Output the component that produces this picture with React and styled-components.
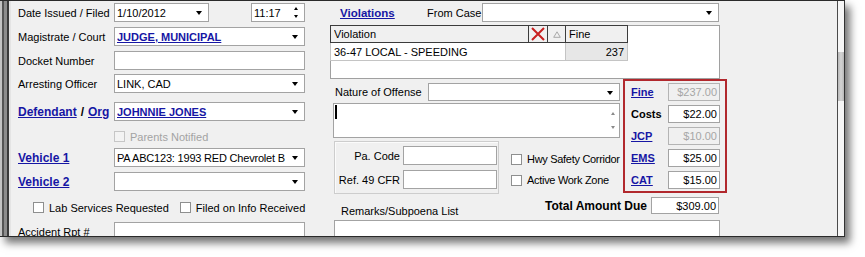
import React from 'react';
import styled, { createGlobalStyle } from 'styled-components';

const GlobalStyle = createGlobalStyle`
  html, body {
    margin: 0;
    padding: 0;
    background: #fff;
  }
  body {
    font-family: "Liberation Sans", Arial, sans-serif;
    font-size: 11px;
    color: #000;
  }
`;

const LINK = '#1616a4';

// ---- window chrome ----
const Stage = styled.div`
  width: 865px;
  height: 257px;
  overflow: hidden;
`;

const Window = styled.div`
  display: flex;
  width: 845px;
  height: 237px;
  box-sizing: border-box;
  border-top: 1px solid #2a2a2a;
  border-bottom: 1px solid #2a2a2a;
  background: #f0f0f0;
  box-shadow: 5px 6px 8px rgba(0, 0, 0, 0.55);
`;

const Frame = styled.div`
  flex: none;
  width: 11px;
  background: linear-gradient(
    to right,
    #c4c4c4 0 2px,
    #555 2px 4px,
    #8d8d8d 4px 7px,
    #3a3a3a 7px 9px,
    #e4e4e4 9px 11px
  );
`;

const Rail = styled.div`
  flex: none;
  width: 8px;
  box-sizing: border-box;
  border-left: 1px solid #4a4a4a;
  border-right: 1px solid #333;
  background: #f6f6f6;
  display: flex;
  flex-direction: column;
`;

const Thumb = styled.div`
  margin-top: 51px;
  height: 49px;
  background: linear-gradient(to right, #b8b8b8, #d4d4d4, #b8b8b8);
`;

const Content = styled.div`
  flex: 1;
  display: flex;
  align-items: flex-start;
  padding: 2px 0 0 7px;
  overflow: hidden;
`;

// ---- shared controls ----
const Column = styled.div`
  flex: none;
  width: ${p => p.$w}px;
  margin-left: ${p => p.$ml || 0}px;
  display: flex;
  flex-direction: column;
`;

const FieldRow = styled.div`
  display: flex;
  align-items: center;
  height: ${p => p.$h || 19}px;
  margin-top: ${p => p.$mt || 0}px;
  padding-left: ${p => p.$pl || 0}px;
  white-space: nowrap;
`;

const Label = styled.span`
  flex: none;
  width: ${p => p.$w || 96}px;
  text-align: ${p => p.$align || 'left'};
  padding-right: ${p => p.$pr || 0}px;
  box-sizing: border-box;
  white-space: nowrap;
`;

const LinkText = styled.span`
  color: ${LINK};
  font-weight: bold;
  font-size: ${p => p.$size || 12}px;
  text-decoration: underline;
`;

const Slash = styled.span`
  font-weight: bold;
  font-size: 12px;
  padding: 0 4px;
`;

const Box = styled.div`
  flex: none;
  display: flex;
  align-items: center;
  box-sizing: border-box;
  width: ${p => p.$w}px;
  height: ${p => p.$h || 19}px;
  background: ${p => (p.$disabled ? '#f0f0f0' : '#fff')};
  border: 1px solid ${p => (p.$disabled ? '#b4b4b4' : '#a3a3a3')};
  color: ${p => (p.$disabled ? '#a6a6a6' : '#000')};
  justify-content: ${p => (p.$right ? 'flex-end' : 'flex-start')};
  padding: 0 ${p => (p.$right ? 2 : 0)}px 0 2px;
  overflow: hidden;
  white-space: nowrap;
`;

const Value = styled.span`
  flex: 1;
  overflow: hidden;
  white-space: nowrap;
  letter-spacing: ${p => p.$tight ? '-0.2px' : 'normal'};
  ${p => p.$link && `color: ${LINK}; font-weight: bold; text-decoration: underline;`}
`;

const Arrow = styled.span`
  flex: none;
  margin: 1px 6px 0 2px;
  border-left: 3.5px solid transparent;
  border-right: 3.5px solid transparent;
  border-top: 4px solid #000;
`;

const SpinCol = styled.span`
  flex: none;
  display: flex;
  flex-direction: column;
  gap: 5px;
  margin-right: 6px;
`;

const Tri = styled.span`
  border-left: 2.5px solid transparent;
  border-right: 2.5px solid transparent;
  ${p => (p.$up ? 'border-bottom' : 'border-top')}: 3px solid ${p => p.$color || '#000'};
`;

const Select = ({ w, h, link, tight, children }) => (
  <Box $w={w} $h={h}>
    <Value $link={link} $tight={tight}>{children}</Value>
    <Arrow />
  </Box>
);

const Check = styled.span`
  flex: none;
  width: 11px;
  height: 11px;
  box-sizing: border-box;
  border: 1px solid ${p => (p.$disabled ? '#c6c6c6' : '#8e8f8f')};
  background: ${p => (p.$disabled ? '#f3f3f3' : '#fff')};
  margin-right: 5px;
`;

const CheckItem = styled.span`
  display: flex;
  align-items: center;
  margin-left: ${p => p.$ml || 0}px;
  color: ${p => (p.$disabled ? '#a3a3a3' : '#000')};
  letter-spacing: ${p => p.$tight ? '-0.3px' : 'normal'};
  white-space: nowrap;
`;

const InputPair = styled.div`
  display: flex;
  justify-content: space-between;
  width: 191px;
`;

// ---- violations grid ----
const Grid = styled.div`
  margin-top: 3px;
  width: 390px;
  height: 54px;
  box-sizing: border-box;
  border: 1px solid #a0a0a0;
  background: #fff;
`;

const GridRow = styled.div`
  display: flex;
  height: 18px;
  margin: ${p => (p.$head ? '-1px 0 0 -1px' : '0 0 0 -1px')};
`;

const HeadCell = styled.div`
  flex: none;
  display: flex;
  align-items: center;
  width: ${p => p.$w}px;
  box-sizing: border-box;
  margin-right: -1px;
  border: 1px solid #3c3c3c;
  background: #f0f0f0;
  padding-left: 3px;
`;

const DelBtn = styled.span`
  flex: none;
  display: flex;
  align-items: center;
  justify-content: center;
  width: 20px;
  height: 18px;
  margin-top: -1px;
  box-sizing: border-box;
  border: 1px solid #3c3c3c;
`;

const SortMark = styled.span`
  flex: none;
  display: flex;
  width: 17px;
  justify-content: center;
`;

const DataCell = styled.div`
  flex: none;
  display: flex;
  align-items: center;
  justify-content: ${p => (p.$right ? 'flex-end' : 'flex-start')};
  width: ${p => p.$w}px;
  box-sizing: border-box;
  margin-right: -1px;
  border: 1px solid #c4c4c4;
  border-top: none;
  background: ${p => (p.$shade ? '#e7e7e7' : '#fff')};
  padding: 0 3px;
`;

// ---- lower middle section ----
const Body = styled.div`
  display: flex;
  align-items: flex-start;
`;

const OffensePane = styled.div`
  flex: none;
  width: 293px;
  display: flex;
  flex-direction: column;
`;

const Memo = styled.div`
  display: flex;
  box-sizing: border-box;
  width: 287px;
  height: 35px;
  margin: 2px 0 0 3px;
  background: #fff;
  border: 1px solid #a3a3a3;
  padding: 1px 0 0 1px;
`;

const Caret = styled.span`
  flex: none;
  width: 2px;
  height: 14px;
  background: #000;
`;

const MemoScroll = styled.span`
  margin-left: auto;
  display: flex;
  flex-direction: column;
  gap: 11px;
  padding: 7px 4px 0 0;
`;

const CodeArea = styled.div`
  display: flex;
  align-items: flex-start;
  margin-top: 3px;
`;

const GroupBox = styled.div`
  flex: none;
  width: 165px;
  height: 53px;
  margin-left: 4px;
  box-sizing: border-box;
  border: 1px solid #cdcdcd;
  box-shadow: inset 1px 1px 0 #fbfbfb;
  padding-top: 4px;
  display: flex;
  flex-direction: column;
  gap: 5px;
`;

const CheckStack = styled.div`
  display: flex;
  flex-direction: column;
  gap: 9px;
  margin: 12px 0 0 12px;
`;

const FeeBox = styled.div`
  flex: none;
  width: 104px;
  box-sizing: border-box;
  border: 2px solid #b1282d;
  padding: 2px 5px 2px 6px;
  display: flex;
  flex-direction: column;
  gap: 4px;
`;

const FeeLabel = styled.span`
  flex: none;
  width: 37px;
  font-size: 11px;
  font-weight: bold;
  ${p => p.$link && `color: ${LINK}; text-decoration: underline;`}
`;

const TotalRow = styled.div`
  display: flex;
  justify-content: space-between;
  height: 22px;
  margin-top: 3px;
  padding: 0 8px 0 11px;
`;

const RemarksLabel = styled.span`
  align-self: flex-end;
  line-height: 13px;
  margin-bottom: 1px;
`;

const TotalGroup = styled.div`
  display: flex;
  align-items: center;
  height: 17px;
  gap: 4px;
`;

const TotalLabel = styled.span`
  font-size: 12px;
  font-weight: bold;
`;

const Remarks = styled.div`
  width: 386px;
  height: 30px;
  margin: 1px 0 0 4px;
  box-sizing: border-box;
  background: #fff;
  border: 1px solid #a3a3a3;
`;

const fees = [
  { label: 'Fine', link: true, value: '$237.00', disabled: true },
  { label: 'Costs', link: false, value: '$22.00' },
  { label: 'JCP', link: true, value: '$10.00', disabled: true },
  { label: 'EMS', link: true, value: '$25.00' },
  { label: 'CAT', link: true, value: '$15.00' },
];

export default function App() {
  return (
    <Stage>
      <GlobalStyle />
      <Window>
        <Frame />
        <Content>
          {/* left column: case details */}
          <Column $w={287}>
            <FieldRow>
              <Label>Date Issued / Filed</Label>
              <InputPair>
                <Select w={95}>1/10/2012</Select>
                <Box $w={54}>
                  <Value>11:17</Value>
                  <SpinCol>
                    <Tri $up />
                    <Tri />
                  </SpinCol>
                </Box>
              </InputPair>
            </FieldRow>
            <FieldRow $mt={5}>
              <Label>Magistrate / Court</Label>
              <Select w={191} link>JUDGE, MUNICIPAL</Select>
            </FieldRow>
            <FieldRow $mt={5}>
              <Label>Docket Number</Label>
              <Box $w={191} />
            </FieldRow>
            <FieldRow $mt={4}>
              <Label>Arresting Officer</Label>
              <Select w={191}>LINK, CAD</Select>
            </FieldRow>
            <FieldRow $mt={9}>
              <Label>
                <LinkText>Defendant</LinkText>
                <Slash>/</Slash>
                <LinkText>Org</LinkText>
              </Label>
              <Select w={191} link>JOHNNIE JONES</Select>
            </FieldRow>
            <FieldRow $mt={10} $h={11} $pl={96}>
              <CheckItem $disabled>
                <Check $disabled />
                Parents Notified
              </CheckItem>
            </FieldRow>
            <FieldRow $mt={6}>
              <Label>
                <LinkText>Vehicle 1</LinkText>
              </Label>
              <Select w={191} tight>PA ABC123: 1993 RED Chevrolet B</Select>
            </FieldRow>
            <FieldRow $mt={5}>
              <Label>
                <LinkText>Vehicle 2</LinkText>
              </Label>
              <Select w={191} />
            </FieldRow>
            <FieldRow $mt={11} $h={11} $pl={15}>
              <CheckItem>
                <Check />
                Lab Services Requested
              </CheckItem>
              <CheckItem $ml={11}>
                <Check />
                Filed on Info Received
              </CheckItem>
            </FieldRow>
            <FieldRow $mt={9}>
              <Label>Accident Rpt #</Label>
              <Box $w={191} />
            </FieldRow>
          </Column>

          {/* middle column: violations and fees */}
          <Column $w={397} $ml={25}>
            <FieldRow $pl={10}>
              <Label $w={87}>
                <LinkText $size={11.5}>Violations</LinkText>
              </Label>
              <Label $w={55}>From Case</Label>
              <Select w={237} />
            </FieldRow>

            <Grid>
              <GridRow $head>
                <HeadCell $w={236}>
                  <Value>Violation</Value>
                  <DelBtn>
                    <svg width="16" height="14" viewBox="0 0 16 14">
                      <path d="M2 1 L14 13 M14 1 L2 13" stroke="#c81f1f" strokeWidth="2" />
                    </svg>
                  </DelBtn>
                  <SortMark>
                    <svg width="8" height="7" viewBox="0 0 8 7">
                      <path d="M4 0.8 L7.3 6.3 L0.7 6.3 Z" fill="none" stroke="#a8a8a8" strokeWidth="1" />
                    </svg>
                  </SortMark>
                </HeadCell>
                <HeadCell $w={63}>Fine</HeadCell>
              </GridRow>
              <GridRow>
                <DataCell $w={236}>36-47 LOCAL - SPEEDING</DataCell>
                <DataCell $w={63} $shade $right>237</DataCell>
              </GridRow>
            </Grid>

            <Body>
              <OffensePane>
                <FieldRow $mt={4} $h={18} $pl={5}>
                  <Label $w={93}>Nature of Offense</Label>
                  <Select w={192} h={18} />
                </FieldRow>
                <Memo>
                  <Caret />
                  <MemoScroll>
                    <Tri $up $color="#8a8a8a" />
                    <Tri $color="#8a8a8a" />
                  </MemoScroll>
                </Memo>
                <CodeArea>
                  <GroupBox>
                    <FieldRow>
                      <Label $w={68} $align="right" $pr={3}>Pa. Code</Label>
                      <Box $w={94} />
                    </FieldRow>
                    <FieldRow>
                      <Label $w={68} $align="right" $pr={3}>Ref. 49 CFR</Label>
                      <Box $w={94} />
                    </FieldRow>
                  </GroupBox>
                  <CheckStack>
                    <CheckItem $tight>
                      <Check />
                      Hwy Safety Corridor
                    </CheckItem>
                    <CheckItem $tight>
                      <Check />
                      Active Work Zone
                    </CheckItem>
                  </CheckStack>
                </CodeArea>
              </OffensePane>

              <FeeBox>
                {fees.map(f => (
                  <FieldRow key={f.label} $h={18}>
                    <FeeLabel $link={f.link}>{f.label}</FeeLabel>
                    <Box $w={52} $h={18} $right $disabled={f.disabled}>
                      {f.value}
                    </Box>
                  </FieldRow>
                ))}
              </FeeBox>
            </Body>

            <TotalRow>
              <RemarksLabel>Remarks/Subpoena List</RemarksLabel>
              <TotalGroup>
                <TotalLabel>Total Amount Due</TotalLabel>
                <Box $w={68} $h={17} $right>$309.00</Box>
              </TotalGroup>
            </TotalRow>
            <Remarks />
          </Column>
        </Content>
        <Rail>
          <Thumb />
        </Rail>
      </Window>
    </Stage>
  );
}
